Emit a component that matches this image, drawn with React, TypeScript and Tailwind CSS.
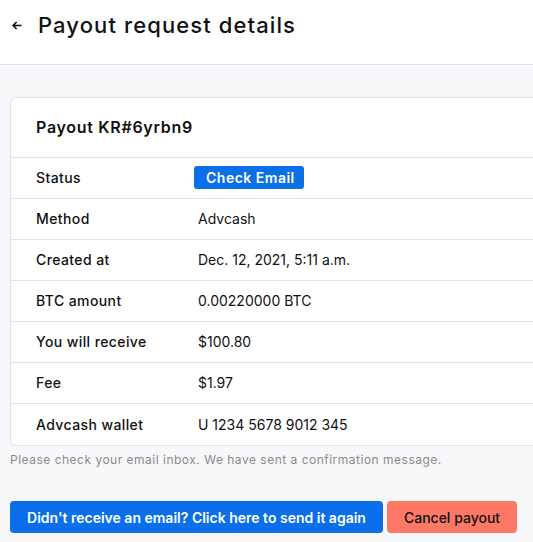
const rows: { label: string; value: string; badge?: boolean }[] = [
  { label: "Status", value: "Check Email", badge: true },
  { label: "Method", value: "Advcash" },
  { label: "Created at", value: "Dec. 12, 2021, 5:11 a.m." },
  { label: "BTC amount", value: "0.00220000 BTC" },
  { label: "You will receive", value: "$100.80" },
  { label: "Fee", value: "$1.97" },
  { label: "Advcash wallet", value: "U 1234 5678 9012 345" },
];

export default function App() {
  return (
    <div className="min-h-[542px] w-[533px] overflow-hidden bg-[#f8f8fa] font-['Inter',sans-serif] text-[#111]">
      <header className="flex h-[65px] items-start gap-[16px] border-b border-[#e2e1f2] bg-white pt-[9px] pl-[12px]">
        <svg className="mt-[12px]" width="10" height="9" viewBox="0 0 10 9" fill="none" stroke="#111" strokeWidth="1.6">
          <path d="M9.5 4.5H1.3M4.6 1L1.1 4.5L4.6 8" />
        </svg>
        <h1 className="text-[22px] font-medium tracking-[1.1px]">Payout request details</h1>
      </header>

      <main className="pt-[32px] pl-[10px]">
        <div className="w-[560px] rounded-[6px] border border-[#e2e1f2] bg-white">
          <div className="flex h-[60px] items-center border-b border-[#e2e1f2] pb-[2px] pl-[25px]">
            <h2 className="text-[16px] font-semibold tracking-[0.7px]">Payout KR#6yrbn9</h2>
          </div>
          {rows.map((r, i) => (
            <div
              key={r.label}
              className={`flex h-[41px] items-center pb-[1px] pl-[25px] text-[14px] ${i < rows.length - 1 ? "border-b border-[#e2e1f2]" : ""}`}
            >
              <div className="w-[162px] font-medium tracking-[0.4px]">{r.label}</div>
              {r.badge ? (
                <span className="-ml-[4px] rounded-[3px] bg-[#0b6fe8] pl-[12px] pr-[9px] py-[1px] text-[14px] font-semibold tracking-[0.5px] text-white">
                  {r.value}
                </span>
              ) : (
                <div>{r.value}</div>
              )}
            </div>
          ))}
        </div>
        <p className="mt-[5px] text-[12px] tracking-[0.5px] text-[#8a8a8e]">
          Please check your email inbox. We have sent a confirmation message.
        </p>

        <div className="mt-[32px] flex gap-[4px]">
          <button className="h-[32px] w-[373px] rounded-[4px] bg-[#0a6fe9] text-[14px] font-semibold text-white">
            Didn't receive an email? Click here to send it again
          </button>
          <button className="h-[32px] w-[130px] rounded-[4px] bg-[#fe7866] text-[14px] font-medium text-[#111]">
            Cancel payout
          </button>
        </div>
      </main>
    </div>
  );
}
